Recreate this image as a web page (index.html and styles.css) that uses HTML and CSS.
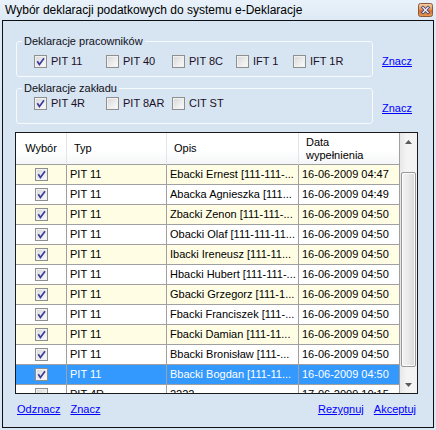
FILE: index.html
```html
<!DOCTYPE html>
<html lang="pl">
<head>
<meta charset="utf-8">
<title>Wybór deklaracji</title>
<link rel="stylesheet" href="styles.css">
</head>
<body>
<div class="window">
  <div class="titlebar">
    <span class="title">Wybór deklaracji podatkowych do systemu e-Deklaracje</span>
    <svg class="close" width="15" height="14" viewBox="0 0 15 14">
      <defs>
        <linearGradient id="cg" x1="0" y1="0" x2="0" y2="1">
          <stop offset="0" stop-color="#f7d2ae"/>
          <stop offset="0.45" stop-color="#e8955a"/>
          <stop offset="0.55" stop-color="#d8702e"/>
          <stop offset="1" stop-color="#e59a52"/>
        </linearGradient>
      </defs>
      <rect x="0.5" y="0.5" width="14" height="13" rx="2" fill="url(#cg)" stroke="#8c5a3a"/>
      <path d="M5 4.5 L10 9.5 M10 4.5 L5 9.5" stroke="#3b3f6b" stroke-width="3" stroke-linecap="square"/>
      <path d="M5 4.5 L10 9.5 M10 4.5 L5 9.5" stroke="#eef0ff" stroke-width="1.4" stroke-linecap="square"/>
    </svg>
  </div>
  <div class="client">
    <div class="group-row">
      <fieldset class="group group-a">
        <legend>Deklaracje pracowników</legend>
        <div class="checks">
          <label class="chk"><span class="cb on"><svg viewBox="0 0 11 11"><path d="M2.3 5.2 L4.4 8.4 L9 2.2"/></svg></span>PIT 11</label>
          <label class="chk"><span class="cb"></span>PIT 40</label>
          <label class="chk"><span class="cb"></span>PIT 8C</label>
          <label class="chk"><span class="cb"></span>IFT 1</label>
          <label class="chk"><span class="cb"></span>IFT 1R</label>
        </div>
      </fieldset>
      <a class="link side-link" href="#">Znacz</a>
    </div>
    <div class="group-row second">
      <fieldset class="group group-b">
        <legend>Deklaracje zakładu</legend>
        <div class="checks">
          <label class="chk"><span class="cb on"><svg viewBox="0 0 11 11"><path d="M2.3 5.2 L4.4 8.4 L9 2.2"/></svg></span>PIT 4R</label>
          <label class="chk"><span class="cb"></span>PIT 8AR</label>
          <label class="chk"><span class="cb"></span>CIT ST</label>
        </div>
      </fieldset>
      <a class="link side-link" href="#">Znacz</a>
    </div>

    <div class="grid">
      <div class="grid-main">
        <div class="row head">
          <div class="c c1 center">Wybór</div>
          <div class="c c2">Typ</div>
          <div class="c c3">Opis</div>
          <div class="c c4 two">Data<br>wypełnienia</div>
        </div>
        <div class="body">
          <div class="row alt"><div class="c c1 center"><span class="cb on"><svg viewBox="0 0 11 11"><path d="M2.3 5.2 L4.4 8.4 L9 2.2"/></svg></span></div><div class="c c2">PIT 11</div><div class="c c3">Ebacki Ernest [111-111-...</div><div class="c c4">16-06-2009 04:47</div></div>
          <div class="row"><div class="c c1 center"><span class="cb on"><svg viewBox="0 0 11 11"><path d="M2.3 5.2 L4.4 8.4 L9 2.2"/></svg></span></div><div class="c c2">PIT 11</div><div class="c c3">Abacka Agnieszka [111...</div><div class="c c4">16-06-2009 04:49</div></div>
          <div class="row alt"><div class="c c1 center"><span class="cb on"><svg viewBox="0 0 11 11"><path d="M2.3 5.2 L4.4 8.4 L9 2.2"/></svg></span></div><div class="c c2">PIT 11</div><div class="c c3">Zbacki Zenon [111-111-...</div><div class="c c4">16-06-2009 04:50</div></div>
          <div class="row"><div class="c c1 center"><span class="cb on"><svg viewBox="0 0 11 11"><path d="M2.3 5.2 L4.4 8.4 L9 2.2"/></svg></span></div><div class="c c2">PIT 11</div><div class="c c3">Obacki Olaf [111-111-11...</div><div class="c c4">16-06-2009 04:50</div></div>
          <div class="row alt"><div class="c c1 center"><span class="cb on"><svg viewBox="0 0 11 11"><path d="M2.3 5.2 L4.4 8.4 L9 2.2"/></svg></span></div><div class="c c2">PIT 11</div><div class="c c3">Ibacki Ireneusz [111-11...</div><div class="c c4">16-06-2009 04:50</div></div>
          <div class="row"><div class="c c1 center"><span class="cb on"><svg viewBox="0 0 11 11"><path d="M2.3 5.2 L4.4 8.4 L9 2.2"/></svg></span></div><div class="c c2">PIT 11</div><div class="c c3">Hbacki Hubert [111-111-...</div><div class="c c4">16-06-2009 04:50</div></div>
          <div class="row alt"><div class="c c1 center"><span class="cb on"><svg viewBox="0 0 11 11"><path d="M2.3 5.2 L4.4 8.4 L9 2.2"/></svg></span></div><div class="c c2">PIT 11</div><div class="c c3">Gbacki Grzegorz [111-1...</div><div class="c c4">16-06-2009 04:50</div></div>
          <div class="row"><div class="c c1 center"><span class="cb on"><svg viewBox="0 0 11 11"><path d="M2.3 5.2 L4.4 8.4 L9 2.2"/></svg></span></div><div class="c c2">PIT 11</div><div class="c c3">Fbacki Franciszek [111-...</div><div class="c c4">16-06-2009 04:50</div></div>
          <div class="row alt"><div class="c c1 center"><span class="cb on"><svg viewBox="0 0 11 11"><path d="M2.3 5.2 L4.4 8.4 L9 2.2"/></svg></span></div><div class="c c2">PIT 11</div><div class="c c3">Fbacki Damian [111-11...</div><div class="c c4">16-06-2009 04:50</div></div>
          <div class="row"><div class="c c1 center"><span class="cb on"><svg viewBox="0 0 11 11"><path d="M2.3 5.2 L4.4 8.4 L9 2.2"/></svg></span></div><div class="c c2">PIT 11</div><div class="c c3">Bbacki Bronisław [111-...</div><div class="c c4">16-06-2009 04:50</div></div>
          <div class="row sel"><div class="c c1 center"><span class="cb on"><svg viewBox="0 0 11 11"><path d="M2.3 5.2 L4.4 8.4 L9 2.2"/></svg></span></div><div class="c c2">PIT 11</div><div class="c c3">Bbacki Bogdan [111-11...</div><div class="c c4">16-06-2009 04:50</div></div>
          <div class="row"><div class="c c1 center"><span class="cb"></span></div><div class="c c2">PIT 4R</div><div class="c c3">2222</div><div class="c c4">17-06-2009 10:15</div></div>
        </div>
      </div>
      <div class="scrollbar">
        <div class="sb-btn"><svg width="7" height="4" viewBox="0 0 7 4"><path d="M0 4 L3.5 0 L7 4 Z" fill="#5a5a5a"/></svg></div>
        <div class="sb-track"><div class="sb-thumb"></div></div>
        <div class="sb-btn"><svg width="7" height="4" viewBox="0 0 7 4"><path d="M0 0 L3.5 4 L7 0 Z" fill="#5a5a5a"/></svg></div>
      </div>
    </div>

    <div class="footer">
      <div class="links"><a class="link" href="#">Odznacz</a><a class="link" href="#">Znacz</a></div>
      <div class="links"><a class="link" href="#">Rezygnuj</a><a class="link" href="#">Akceptuj</a></div>
    </div>
  </div>
</div>
</body>
</html>
```

FILE: styles.css
```css
* { box-sizing: border-box; }
html, body { margin: 0; padding: 0; }
body {
  width: 436px;
  height: 430px;
  overflow: hidden;
  font-family: "Liberation Sans", Arial, sans-serif;
  font-size: 11px;
  color: #000;
  background: #dce8f4;
}
.window {
  width: 436px;
  height: 430px;
  display: flex;
  flex-direction: column;
  background: linear-gradient(#e9f2fa, #dde9f5 20px, #d9e6f3);
}
.titlebar {
  height: 20px;
  flex: none;
  display: flex;
  align-items: center;
  justify-content: space-between;
  padding: 0 3px 0 5px;
}
.title {
  font-size: 12px;
  line-height: 14px;
  color: #000;
}
.close { display: block; }

.client {
  flex: 1;
  margin: 0 2px 2px 2px;
  border: 1px solid #101010;
  background: #d7e4f2;
  padding: 14px 0 0 12px;
  display: flex;
  flex-direction: column;
}
.group-row {
  display: flex;
  align-items: flex-start;
  padding-left: 1px;
}
.group-row.second { margin-top: 5px; }
.group {
  margin: 0;
  width: 357px;
  border: 1px solid #f7fafd;
  border-radius: 3px;
  padding: 7px 0 8px 0;
  min-width: 0;
}
.group-b { padding: 2px 0 13px 0; }
.group legend {
  margin-left: 5px;
  padding: 0 2px;
  line-height: 13px;
  font-size: 11px;
  color: #101018;
}
.checks {
  display: grid;
  grid-template-columns: 72px 66px 64px 57px auto;
  height: 13px;
  padding-left: 17px;
}
.chk {
  display: flex;
  align-items: center;
  gap: 4px;
  line-height: 13px;
  color: #1a1024;
  white-space: nowrap;
}
.cb {
  width: 13px;
  height: 13px;
  flex: none;
  display: block;
  border: 1px solid #8e8f8f;
  background: linear-gradient(135deg, #d6d6d6 0%, #ececec 55%, #fdfdfd 100%);
  box-shadow: inset 0 0 0 1px #f1f1f1;
}
.cb svg {
  display: block;
  width: 11px;
  height: 11px;
}
.cb svg path {
  fill: none;
  stroke: #3a3c9e;
  stroke-width: 1.7;
}
.link {
  color: #0000ff;
  text-decoration: underline;
  line-height: 13px;
  white-space: nowrap;
}
.side-link {
  margin-left: 9px;
  margin-top: 20px;
}

.grid {
  margin-top: 8px;
  margin-left: 0;
  width: 403px;
  height: 262px;
  border: 1px solid #1a1a1a;
  display: flex;
  background: #fff;
}
.grid-main {
  width: 384px;
  display: flex;
  flex-direction: column;
  overflow: hidden;
}
.body {
  flex: 1;
  overflow: hidden;
}
.row {
  display: flex;
  height: 20px;
  background: #fff;
}
.row.alt { background: #fffde3; }
.row.sel { background: #3399ff; color: #fff; }
.c {
  border-right: 1px solid #a0a0a0;
  border-bottom: 1px solid #a0a0a0;
  padding-left: 3px;
  line-height: 19px;
  white-space: nowrap;
  overflow: hidden;
  display: flex;
  align-items: center;
}
.c1 { width: 51px; }
.c2 { width: 100px; }
.c3 { width: 132px; }
.c4 { width: 101px; }
.c.center { justify-content: center; padding-left: 0; }

.row.head {
  height: 32px;
  background: linear-gradient(#ffffff, #ffffff 55%, #f4f5f7);
}
.head .c {
  border-right-color: #e2e4e7;
  border-bottom-color: #a0a0a0;
  padding-left: 7px;
  line-height: 13px;
}
.head .c.center { padding-left: 0; }
.head .c4 { border-right-color: #a0a0a0; }
.head .two { display: block; padding-top: 3px; }

.scrollbar {
  width: 17px;
  display: flex;
  flex-direction: column;
  background: linear-gradient(90deg, #e8e8e8, #f4f4f4 40%, #f2f2f2);
}
.sb-btn {
  height: 17px;
  flex: none;
  display: flex;
  align-items: center;
  justify-content: center;
}
.sb-track {
  flex: 1;
  padding: 22px 1px 0 1px;
}
.sb-thumb {
  height: 195px;
  border: 1px solid #979797;
  border-radius: 2px;
  background: linear-gradient(90deg, #f3f3f3, #e9e9e9 50%, #d8d8d8);
  box-shadow: inset 0 0 0 1px #fbfbfb;
}

.footer {
  margin-top: 9px;
  display: flex;
  justify-content: space-between;
  padding: 0 17px 0 2px;
}
.links {
  display: flex;
  gap: 10px;
}
```
